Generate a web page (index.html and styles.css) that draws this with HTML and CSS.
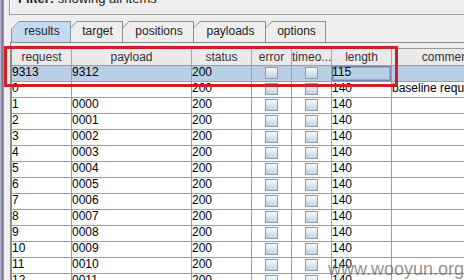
FILE: index.html
```html
<!DOCTYPE html>
<html>
<head>
<meta charset="UTF-8">
<title>Intruder results</title>
<link rel="stylesheet" href="styles.css">
</head>
<body>
<div class="window">
	<div class="edge"></div>
	<div class="main">
		<div class="filter"><b>Filter:</b> showing all items</div>
		<div class="tabs">
			<div class="tab active w-results"><span>results</span></div>
			<div class="tab w-target"><span>target</span></div>
			<div class="tab w-positions"><span>positions</span></div>
			<div class="tab w-payloads"><span>payloads</span></div>
			<div class="tab w-options"><span>options</span></div>
		</div>
		<div class="pane">
			<div class="grid">
				<div class="row head">
					<div class="c1">request</div><div class="c2">payload</div><div class="c3">status</div><div class="c4">error</div><div class="c5">timeo...</div><div class="c6">length</div><div class="c7">comment</div>
				</div>
				<div class="row sel">
					<div class="c1">9313</div><div class="c2">9312</div><div class="c3">200</div><div class="c4"><i class="cb"></i></div><div class="c5"><i class="cb"></i></div><div class="c6 focus">115</div><div class="c7"></div>
				</div>
				<div class="row">
					<div class="c1">0</div><div class="c2"></div><div class="c3">200</div><div class="c4"><i class="cb"></i></div><div class="c5"><i class="cb"></i></div><div class="c6">140</div><div class="c7">baseline request</div>
				</div>
				<div class="row">
					<div class="c1">1</div><div class="c2">0000</div><div class="c3">200</div><div class="c4"><i class="cb"></i></div><div class="c5"><i class="cb"></i></div><div class="c6">140</div><div class="c7"></div>
				</div>
				<div class="row">
					<div class="c1">2</div><div class="c2">0001</div><div class="c3">200</div><div class="c4"><i class="cb"></i></div><div class="c5"><i class="cb"></i></div><div class="c6">140</div><div class="c7"></div>
				</div>
				<div class="row">
					<div class="c1">3</div><div class="c2">0002</div><div class="c3">200</div><div class="c4"><i class="cb"></i></div><div class="c5"><i class="cb"></i></div><div class="c6">140</div><div class="c7"></div>
				</div>
				<div class="row">
					<div class="c1">4</div><div class="c2">0003</div><div class="c3">200</div><div class="c4"><i class="cb"></i></div><div class="c5"><i class="cb"></i></div><div class="c6">140</div><div class="c7"></div>
				</div>
				<div class="row">
					<div class="c1">5</div><div class="c2">0004</div><div class="c3">200</div><div class="c4"><i class="cb"></i></div><div class="c5"><i class="cb"></i></div><div class="c6">140</div><div class="c7"></div>
				</div>
				<div class="row">
					<div class="c1">6</div><div class="c2">0005</div><div class="c3">200</div><div class="c4"><i class="cb"></i></div><div class="c5"><i class="cb"></i></div><div class="c6">140</div><div class="c7"></div>
				</div>
				<div class="row">
					<div class="c1">7</div><div class="c2">0006</div><div class="c3">200</div><div class="c4"><i class="cb"></i></div><div class="c5"><i class="cb"></i></div><div class="c6">140</div><div class="c7"></div>
				</div>
				<div class="row">
					<div class="c1">8</div><div class="c2">0007</div><div class="c3">200</div><div class="c4"><i class="cb"></i></div><div class="c5"><i class="cb"></i></div><div class="c6">140</div><div class="c7"></div>
				</div>
				<div class="row">
					<div class="c1">9</div><div class="c2">0008</div><div class="c3">200</div><div class="c4"><i class="cb"></i></div><div class="c5"><i class="cb"></i></div><div class="c6">140</div><div class="c7"></div>
				</div>
				<div class="row">
					<div class="c1">10</div><div class="c2">0009</div><div class="c3">200</div><div class="c4"><i class="cb"></i></div><div class="c5"><i class="cb"></i></div><div class="c6">140</div><div class="c7"></div>
				</div>
				<div class="row">
					<div class="c1">11</div><div class="c2">0010</div><div class="c3">200</div><div class="c4"><i class="cb"></i></div><div class="c5"><i class="cb"></i></div><div class="c6">140</div><div class="c7"></div>
				</div>
				<div class="row">
					<div class="c1">12</div><div class="c2">0011</div><div class="c3">200</div><div class="c4"><i class="cb"></i></div><div class="c5"><i class="cb"></i></div><div class="c6">140</div><div class="c7"></div>
				</div>
			</div>
		</div>
	</div>
	<div class="callout"></div>
	<div class="mark">www.wooyun.org</div>
</div>
</body>
</html>
```

FILE: styles.css
```css
html, body {
	margin: 0;
	padding: 0;
	overflow: hidden;
}
body {
	width: 464px;
	height: 280px;
	background-color: #EEEEEE;
	font-family: "Liberation Sans", Arial, sans-serif;
	font-size: 12px;
	color: #000000;
}
.window {
	position: relative;
	display: flex;
	width: 464px;
	height: 280px;
	overflow: hidden;
}
.edge {
	flex: none;
	width: 4px;
	background: linear-gradient(to right, #C9C4D9, #9690AC 35%, #716C8C 70%, #B9B6C6);
}
.main {
	flex: none;
	width: 560px;
}

/* filter bar */
.filter {
	margin: -11px 0 0 5px;
	padding: 2px 0 0 8px;
	box-sizing: border-box;
	height: 26px;
	border: 1px solid #9C9C9C;
	box-shadow: inset 1px 1px 0 #FFFFFF;
	line-height: 14px;
	font-size: 13px;
	color: #222222;
}

/* tabs */
.tabs {
	display: flex;
	margin: 6px 0 0 7px;
	height: 21px;
}
.tab {
	position: relative;
	height: 21px;
	background-color: #8E8E8E;
	clip-path: polygon(0 7px, 7px 0, 100% 0, 100% 100%, 0 100%);
	margin-left: -1px;
	text-align: center;
	line-height: 21px;
	color: #222222;
}
.tab:first-child {
	margin-left: 0;
}
.tab::before {
	content: "";
	position: absolute;
	top: 1px;
	left: 1px;
	right: 1px;
	bottom: 0;
	background-color: #EEEEEE;
	clip-path: polygon(0 6px, 6px 0, 100% 0, 100% 100%, 0 100%);
}
.tab span {
	position: relative;
	padding-left: 2px;
}
.tab.active {
	z-index: 1;
	clip-path: polygon(0 8px, 8px 0, 100% 0, 100% 100%, 0 100%);
	background-color: #7F96B0;
}
.tab.active::before {
	background-color: #C6DAEE;
	clip-path: polygon(0 7px, 7px 0, 100% 0, 100% 100%, 0 100%);
}
.w-results { width: 60px; }
.w-target { width: 53px; }
.w-positions { width: 72px; }
.w-payloads { width: 73px; }
.w-options { width: 61px; }

/* table */
.pane {
	margin-left: 6px;
	padding-top: 5px;
	border-top: 1px solid #8A8A8A;
	border-left: 1px solid #8A8A8A;
}
.grid {
	border-top: 1px solid #9A9A9A;
	border-left: 1px solid #8C8C8C;
	background-color: #FFFFFF;
}
.row {
	display: flex;
	height: 15px;
	border-bottom: 1px solid #9D9D9D;
	line-height: 13px;
}
.row > div {
	flex: none;
	box-sizing: border-box;
	height: 15px;
	border-right: 1px solid #9D9D9D;
	white-space: nowrap;
	overflow: hidden;
}
.c1 { width: 60px; }
.c2 { width: 120px; }
.c3 { width: 60px; }
.c4 { width: 40px; text-align: center; }
.c5 { width: 40px; text-align: center; }
.c6 { width: 60px; }
.c7 { width: 110px; }

.row.head {
	height: 16px;
	background-color: #EAEAEA;
	line-height: 16px;
	color: #333333;
}
.row.head > div {
	height: 16px;
	text-align: center;
	border-right-color: #A6A6A6;
}
.row.sel {
	background-color: #B8CFE5;
}
.focus {
	box-shadow: inset 0 0 0 1px #6F87B2, inset 0 0 0 2px #97AACB;
}
.cb {
	display: inline-block;
	box-sizing: border-box;
	width: 13px;
	height: 12px;
	margin-top: 1px;
	border: 1px solid #8E9CAC;
	background: linear-gradient(to bottom, #F7FAFD, #D6E2EE 60%, #C2D2E3);
	vertical-align: top;
}

/* annotation overlay */
.callout {
	position: absolute;
	left: 4px;
	top: 46px;
	width: 394px;
	height: 41px;
	box-sizing: border-box;
	border: 3px solid #D11F26;
}
.mark {
	position: absolute;
	top: 260px;
	right: 0;
	font-size: 18px;
	line-height: 18px;
	color: rgba(95, 95, 95, 0.7);
	white-space: nowrap;
}
```
